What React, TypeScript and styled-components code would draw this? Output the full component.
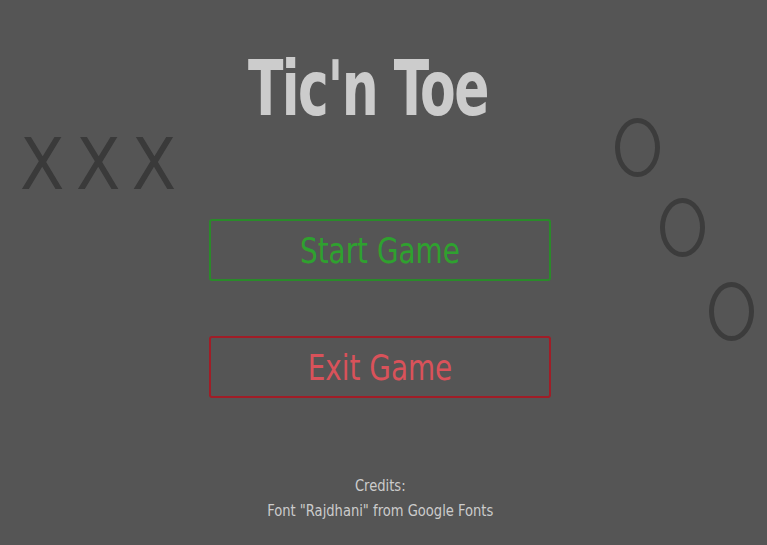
import React from 'react';
import styled, {createGlobalStyle} from 'styled-components';

const GlobalStyle = createGlobalStyle`
    html, body {
        margin: 0;
        padding: 0;
        height: 100%;
        background: #555555;
    }
    #root {
        height: 100%;
    }
`;

const FontStack = `"DejaVu Sans Condensed", "Liberation Sans Narrow", "DejaVu Sans", sans-serif`;

const Page = styled.div`
    position: relative;
    box-sizing: border-box;
    width: 100%;
    height: 100%;
    min-height: 545px;
    padding-right: 7px;
    overflow: hidden;
    background: #555555;
    font-family: ${FontStack};
    display: flex;
    flex-direction: column;
    align-items: center;
`;

const Title = styled.h1`
    margin: 44px 24px 0 0;
    font-size: 76px;
    font-weight: bold;
    line-height: 90px;
    letter-spacing: -2px;
    color: #cccccc;
    transform: scaleX(0.76);
`;

const Menu = styled.div`
    margin-top: 85px;
    display: flex;
    flex-direction: column;
    gap: 55px;
`;

const MenuButton = styled.button<{$color: string; $text: string}>`
    box-sizing: border-box;
    width: 342px;
    height: 62px;
    background: transparent;
    border: 2.5px solid ${p => p.$color};
    border-radius: 3px;
    color: ${p => p.$text};
    font-family: ${FontStack};
    font-weight: 200;
    font-size: 36px;
    padding: 0;
    cursor: pointer;
    &:focus {
        outline: none;
    }
    span {
        display: inline-block;
        transform: scaleX(0.86);
    }
`;

const Credits = styled.div`
    margin-top: auto;
    margin-bottom: 22px;
    text-align: center;
    color: #cccccc;
    font-size: 16px;
    line-height: 25px;
    font-weight: 200;
    transform: scaleX(0.91);
`;

const Crosses = styled.div`
    position: absolute;
    left: 20px;
    top: 122px;
    font-size: 72px;
    font-weight: 200;
    color: #3a3a3a;
    letter-spacing: -4.5px;
`;

const Nought = styled.div<{$left: number; $top: number}>`
    position: absolute;
    left: ${p => p.$left}px;
    top: ${p => p.$top}px;
    width: 35px;
    height: 49px;
    border: 5px solid #3c3c3c;
    border-radius: 50%;
`;

const noughts = [
    {left: 615, top: 118},
    {left: 660, top: 198},
    {left: 709, top: 282},
];

export const App = () => {
    return (
        <Page>
            <GlobalStyle />
            <Crosses>X X X</Crosses>
            {noughts.map((n, i) => (
                <Nought key={i} $left={n.left} $top={n.top} />
            ))}
            <Title>Tic'n Toe</Title>
            <Menu>
                <MenuButton $color="#2a8a2a" $text="#2fa12f"><span>Start Game</span></MenuButton>
                <MenuButton $color="#a01d27" $text="#d9525a"><span>Exit Game</span></MenuButton>
            </Menu>
            <Credits>
                Credits:
                <br />
                Font "Rajdhani" from Google Fonts
            </Credits>
        </Page>
    );
};

export default App;
